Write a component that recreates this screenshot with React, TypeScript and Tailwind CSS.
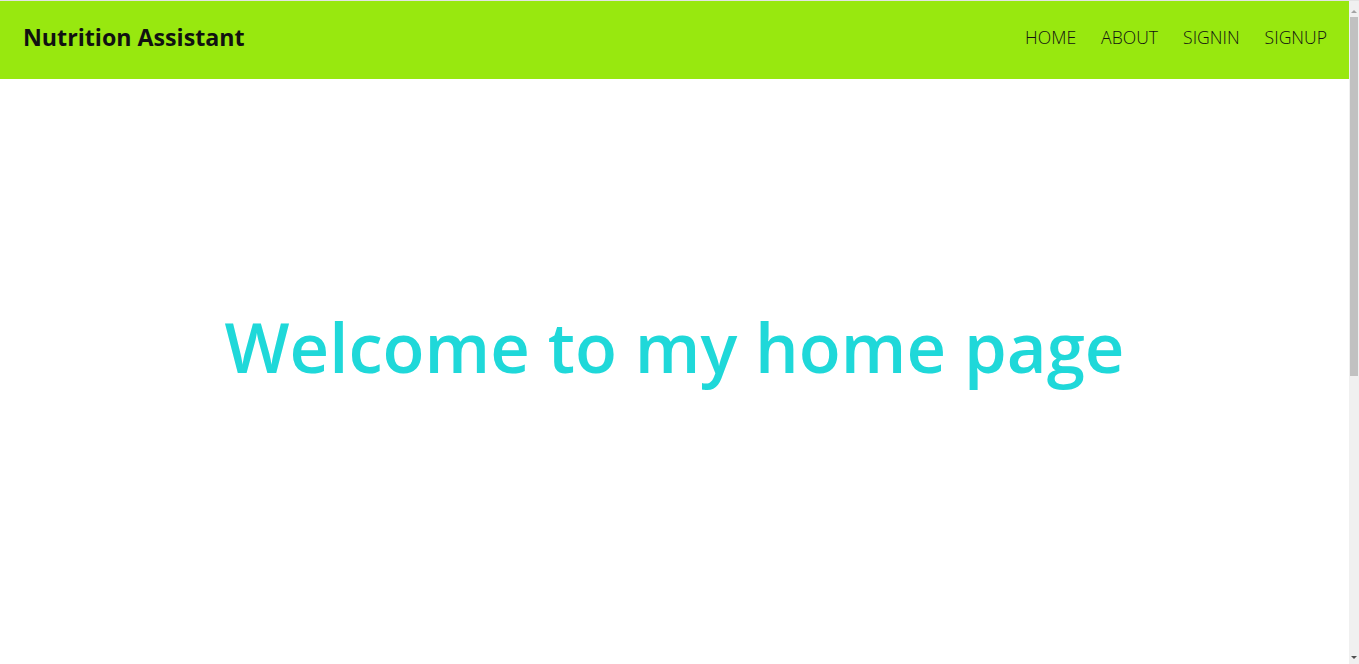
export default function App() {
  return (
    <div className="flex h-[664px] w-full flex-col overflow-hidden bg-white">
      <div className="h-px w-full bg-[#e3e3e3]" />
      <div className="flex min-h-0 flex-1">
        <div className="flex min-w-0 flex-1 flex-col font-['Open_Sans',sans-serif]">
          <nav className="flex h-[78px] items-center justify-between bg-[#98e80f] pb-[5px] pl-[23px] pr-[22px]">
            <span className="text-[23.2px] font-bold text-[#111]">Nutrition Assistant</span>
            <div className="flex items-center gap-[25px] text-[17.6px] font-light text-[#111]">
              <a>HOME</a>
              <a>ABOUT</a>
              <a>SIGNIN</a>
              <a>SIGNUP</a>
            </div>
          </nav>
          <main className="flex flex-1 items-start justify-center pt-[233px]">
            <h1 className="text-[68.8px] font-semibold leading-none text-[#1fd8d9]">Welcome to my home page</h1>
          </main>
        </div>
        <div className="flex w-[10px] flex-col bg-[#f0f0f0]">
          <div className="flex h-[16px] items-center justify-center pt-[4px]">
            <div className="h-0 w-0 border-x-[3px] border-b-[3px] border-x-transparent border-b-[#a3a3a3]" />
          </div>
          <div className="mx-[1px] h-[359px] bg-[#c1c1c1]" />
          <div className="flex-1" />
          <div className="flex h-[14px] items-center justify-center">
            <div className="h-0 w-0 border-x-[3px] border-t-[3px] border-x-transparent border-t-[#505050]" />
          </div>
        </div>
      </div>
    </div>
  );
}
